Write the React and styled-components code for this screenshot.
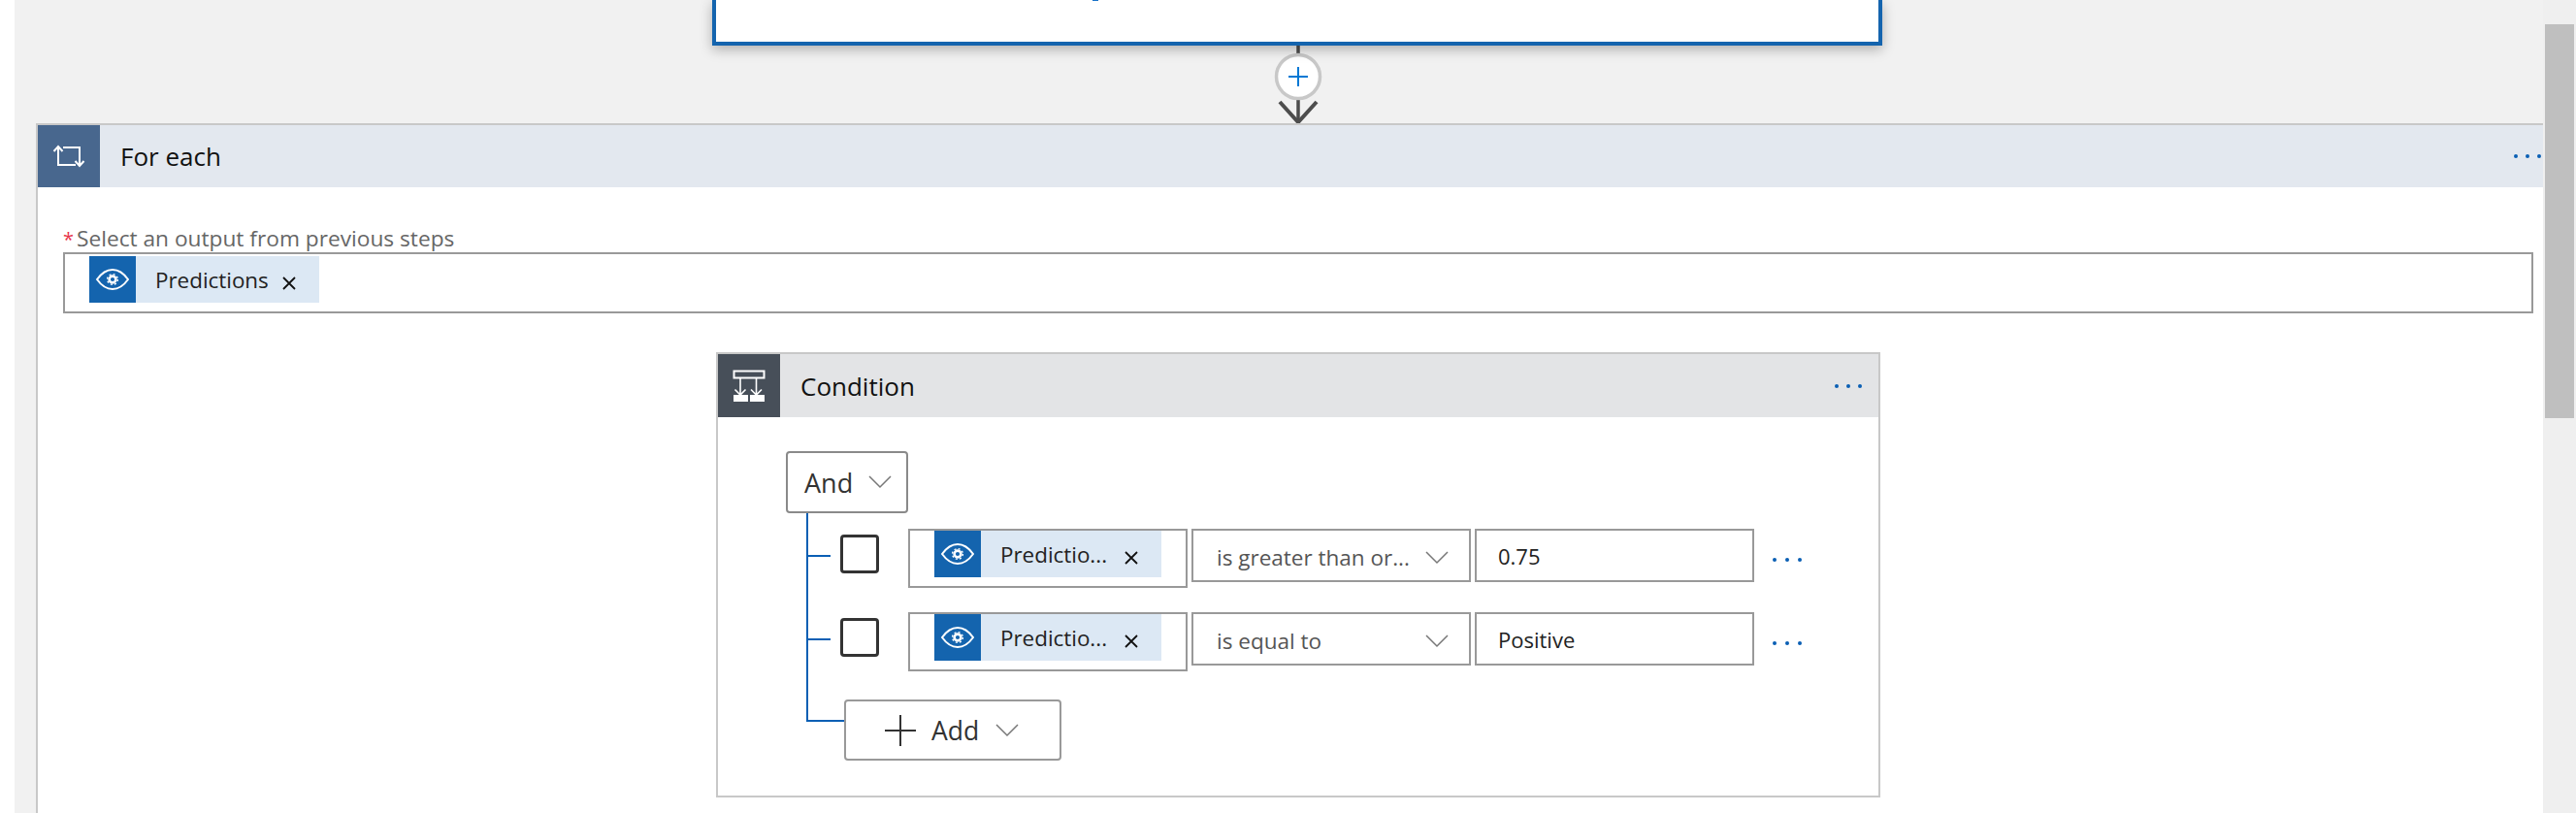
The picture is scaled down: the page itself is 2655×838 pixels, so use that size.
import styled, { createGlobalStyle } from "styled-components";

const GlobalStyle = createGlobalStyle`
  html, body {
    margin: 0;
    padding: 0;
    background: #fff;
  }
  * {
    box-sizing: border-box;
  }
`;

const Page = styled.div`
  display: flex;
  width: 2655px;
  height: 838px;
  padding-left: 15px;
  overflow: hidden;
  background: #fff;
  color: #111;
  font-family: "Open Sans", "Noto Sans", sans-serif;
`;

const Canvas = styled.div`
  width: 2606px;
  height: 838px;
  padding-left: 22px;
  display: flex;
  flex-direction: column;
  background: #f1f1f1;
  overflow: hidden;
`;

const ScrollColumn = styled.div`
  flex: 1;
  background: #efefef;
  padding: 25px 2px 0 2px;
`;

const ScrollThumb = styled.div`
  width: 30px;
  height: 406px;
  background: #bfbfbf;
`;

const TriggerCard = styled.div`
  position: relative;
  flex: none;
  width: 1206px;
  height: 47px;
  margin-left: 697px;
  background: #fff;
  border: 4px solid #1464ae;
  border-top: none;
  box-shadow: 0 4px 12px rgba(0, 0, 0, 0.28);
`;

const Descender = styled.span`
  position: absolute;
  left: 388px;
  top: 0;
  width: 6px;
  height: 1px;
  background: #1a73c8;
`;

const Connector = styled.svg`
  flex: none;
  display: block;
  margin-left: 1277px;
  overflow: visible;
`;

const Card = styled.section`
  background: #fff;
  border: 2px solid #c8c8c8;
`;

const LoopCard = styled(Card)`
  flex: 1;
  width: 2584px;
  border-right: none;
  border-bottom: none;
`;

const ConditionCard = styled(Card)`
  width: 1200px;
  height: 459px;
  margin-left: 699px;
`;

const CardHeader = styled.header`
  display: flex;
  align-items: center;
  height: ${(p) => p.$height}px;
  background: ${(p) => p.$bg};
`;

const HeaderIcon = styled.div`
  flex: none;
  width: 64px;
  height: 100%;
  display: flex;
  align-items: center;
  justify-content: center;
  background: ${(p) => p.$bg};
`;

const CardTitle = styled.h2`
  flex: 1;
  margin: 0 0 0 21px;
  font-size: 26px;
  font-weight: 400;
  color: #111;
`;

const Dots = styled.div`
  flex: none;
  display: flex;
  gap: ${(p) => p.$gap}px;
  margin-right: ${(p) => p.$right}px;

  span {
    width: ${(p) => p.$size}px;
    height: ${(p) => p.$size}px;
    border-radius: 50%;
    background: #0a5fb4;
  }
`;

const LoopBody = styled.div`
  padding: 39px 0 0 26px;
`;

const FieldLabel = styled.div`
  display: flex;
  align-items: baseline;
  height: 28px;
  font-size: 22.7px;
  line-height: 28px;
  color: #666;
`;

const Required = styled.span`
  width: 14px;
  font-size: 20px;
  color: #e8354a;
`;

const OutputInput = styled.div`
  width: 2546px;
  height: 63px;
  margin-bottom: 40px;
  padding: 2px 0 0 25px;
  background: #fff;
  border: 2px solid #999;
`;

const Chip = styled.div`
  display: flex;
  align-items: center;
  width: ${(p) => p.$width}px;
  height: 48px;
  background: #dce8f4;
  font-size: 22.4px;
`;

const ChipIcon = styled.div`
  flex: none;
  width: 48px;
  height: 48px;
  display: flex;
  align-items: center;
  justify-content: center;
  background: #1464ae;
`;

const ChipLabel = styled.span`
  flex: 1;
  margin-left: 20px;
  white-space: nowrap;
  color: #222;
`;

const ChipClose = styled.svg`
  flex: none;
  margin: 7px 24px 0 0;
`;

const ConditionBody = styled.div`
  display: flex;
  flex-direction: column;
  padding: 35px 0 0 70px;
`;

const AndSelect = styled.div`
  display: flex;
  align-items: center;
  justify-content: space-between;
  width: 126px;
  height: 64px;
  padding: 0 15px 0 17px;
  border: 2px solid #8a8a8a;
  border-radius: 4px;
  font-size: 27px;
  color: #333;
`;

const Tree = styled.div`
  position: relative;
  display: flex;
  flex-direction: column;
  margin-left: 21px;
  padding-top: 16px;
  width: 1080px;
`;

const TreeLine = styled.div`
  position: absolute;
  left: 0;
  top: 0;
  width: 2px;
  height: 215px;
  background: #0a5fb4;
`;

const Row = styled.div`
  display: flex;
  align-items: flex-start;
  height: 86px;
`;

const Branch = styled.div`
  flex: none;
  width: ${(p) => p.$width}px;
  height: 2px;
  margin-top: ${(p) => p.$top}px;
  background: #0a5fb4;
`;

const Checkbox = styled.div`
  flex: none;
  width: 40px;
  height: 40px;
  margin: 6px 30px 0 10px;
  background: #fff;
  border: 3px solid #333;
  border-radius: 4px;
`;

const Expression = styled.div`
  flex: none;
  width: 288px;
  height: 61px;
  padding: 0 0 0 25px;
  margin-right: 4px;
  border: 2px solid #999;
`;

const Field = styled.div`
  flex: none;
  display: flex;
  align-items: center;
  justify-content: space-between;
  width: 288px;
  height: 55px;
  padding: 0 21px 0 22px;
  margin-right: 4px;
  border: 2px solid #999;
  font-size: 22px;
  color: #222;
`;

const OperatorField = styled(Field)`
  padding: 4px 21px 0 24px;
  font-size: 22.5px;
  color: #555;
`;

const AddRow = styled.div`
  display: flex;
  align-items: flex-start;
  margin-top: 4px;
`;

const AddButton = styled.div`
  display: flex;
  align-items: center;
  width: 224px;
  height: 63px;
  padding-left: 40px;
  border: 2px solid #999;
  border-radius: 4px;
  font-size: 26.5px;
  font-weight: 500;
  color: #333;
`;

const AddLabel = styled.span`
  margin: 0 17px 0 16px;
`;

const RowDots = styled.div`
  margin: 30px 0 0 15px;
`;

const Chevron = () => (
  <svg width="24" height="14" viewBox="0 0 24 14">
    <path d="M1 1l11 11L23 1" fill="none" stroke="#777" strokeWidth="1.5" />
  </svg>
);

const Eye = () => (
  <svg width="36" height="24" viewBox="0 0 36 24">
    <path d="M2 12C7 5 12 2 18 2s11 3 16 10c-5 7-10 10-16 10S7 19 2 12z" fill="none" stroke="#fff" strokeWidth="2" />
    <circle cx="18" cy="12" r="3.4" fill="none" stroke="#fff" strokeWidth="2.6" />
    <circle cx="18" cy="12" r="5.4" fill="none" stroke="#fff" strokeWidth="1.4" strokeDasharray="2 2.24" />
  </svg>
);

const Close = () => (
  <ChipClose width="14" height="14" viewBox="0 0 14 14">
    <path d="M1 1l12 12M13 1L1 13" stroke="#111" strokeWidth="1.8" />
  </ChipClose>
);

const ThreeDots = (props) => (
  <Dots {...props}>
    <span />
    <span />
    <span />
  </Dots>
);

const ExpressionRow = ({ operator, value }) => (
  <Row>
    <Branch $width={25} $top={27} />
    <Checkbox />
    <Expression>
      <Chip $width={234}>
        <ChipIcon>
          <Eye />
        </ChipIcon>
        <ChipLabel>Predictio...</ChipLabel>
        <Close />
      </Chip>
    </Expression>
    <OperatorField>
      {operator}
      <Chevron />
    </OperatorField>
    <Field>{value}</Field>
    <RowDots>
      <ThreeDots $gap={9} $right={0} $size={4} />
    </RowDots>
  </Row>
);

export default function App() {
  return (
    <Page>
      <GlobalStyle />
      <Canvas>
        <TriggerCard>
          <Descender />
        </TriggerCard>
        <Connector width="48" height="80" viewBox="0 0 48 80">
          <path d="M24 0v9M24 56v22" stroke="#4d4d4d" strokeWidth="3.5" />
          <circle cx="24" cy="32" r="22.5" fill="#fff" stroke="#c8c8c8" strokeWidth="3.5" />
          <path d="M14 32h20M24 22v20" stroke="#0078d4" strokeWidth="2" />
          <path d="M5 58l19 21 19-21" fill="none" stroke="#4d4d4d" strokeWidth="4" />
        </Connector>
        <LoopCard>
          <CardHeader $height={64} $bg="#e3e8ef">
            <HeaderIcon $bg="#48678e">
              <svg width="34" height="30" viewBox="0 0 34 30">
                <path d="M6 6v18h18M11 6h17v18" fill="none" stroke="#fff" strokeWidth="2" />
                <path d="M1.500 10L6 5l4.500 5M23.500 20l4.500 5 4.500-5" fill="none" stroke="#fff" strokeWidth="2" />
              </svg>
            </HeaderIcon>
            <CardTitle>For each</CardTitle>
            <ThreeDots $gap={8} $right={2} $size={4} />
          </CardHeader>
          <LoopBody>
            <FieldLabel>
              <Required>*</Required>
              Select an output from previous steps
            </FieldLabel>
            <OutputInput>
              <Chip $width={237}>
                <ChipIcon>
                  <Eye />
                </ChipIcon>
                <ChipLabel>Predictions</ChipLabel>
                <Close />
              </Chip>
            </OutputInput>
          </LoopBody>
          <ConditionCard>
            <CardHeader $height={65} $bg="#e3e4e6">
              <HeaderIcon $bg="#474f59">
                <svg width="34" height="34" viewBox="0 0 34 34">
                  <path d="M1.500 1.500h31v7h-31z" fill="none" stroke="#fff" strokeWidth="2" />
                  <path d="M8 9v17M24.500 9v17M2.500 20.500l5.500 5.500 5.500-5.500M19 20.500l5.500 5.500 5.500-5.500" fill="none" stroke="#fff" strokeWidth="1.600" />
                  <path d="M1 26h15v7H1zM18 26h15v7H18z" fill="#fff" />
                </svg>
              </HeaderIcon>
              <CardTitle>Condition</CardTitle>
              <ThreeDots $gap={8} $right={17} $size={4} />
            </CardHeader>
            <ConditionBody>
              <AndSelect>
                And
                <Chevron />
              </AndSelect>
              <Tree>
                <TreeLine />
                <ExpressionRow operator="is greater than or..." value="0.75" />
                <ExpressionRow operator="is equal to" value="Positive" />
                <AddRow>
                  <Branch $width={39} $top={21} />
                  <AddButton>
                    <svg width="32" height="32" viewBox="0 0 32 32">
                      <path d="M0 16h32M16 0v32" stroke="#333" strokeWidth="2" />
                    </svg>
                    <AddLabel>Add</AddLabel>
                    <Chevron />
                  </AddButton>
                </AddRow>
              </Tree>
            </ConditionBody>
          </ConditionCard>
        </LoopCard>
      </Canvas>
      <ScrollColumn>
        <ScrollThumb />
      </ScrollColumn>
    </Page>
  );
}
